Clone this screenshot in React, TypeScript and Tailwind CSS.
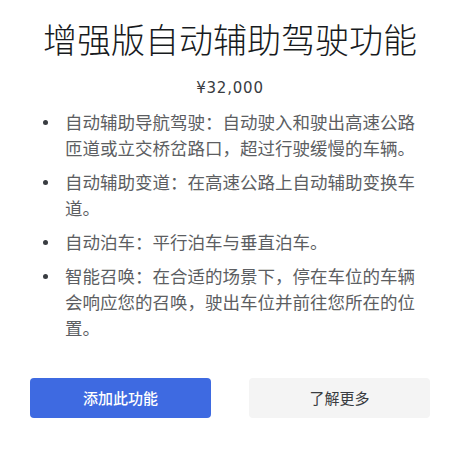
import React from "react";

const cjk = { fontFamily: '"Noto Sans CJK SC", "Noto Sans", sans-serif' };

const features = [
  "自动辅助导航驾驶：自动驶入和驶出高速公路匝道或立交桥岔路口，超过行驶缓慢的车辆。",
  "自动辅助变道：在高速公路上自动辅助变换车道。",
  "自动泊车：平行泊车与垂直泊车。",
  "智能召唤：在合适的场景下，停在车位的车辆会响应您的召唤，驶出车位并前往您所在的位置。",
];

export default function App() {
  return (
    <div className="min-h-[450px] w-[471px] bg-white" style={cjk}>
      <div className="ml-[30px] w-[400px] pt-[19px]">
        <h1 className="text-center text-[34px] leading-[40px] font-light text-[#171a20]">
          增强版自动辅助驾驶功能
        </h1>
        <div
          className="mt-[19px] text-center text-[15px] leading-[20px] tracking-[0.8px] text-[#393c41]"
          style={{ fontFamily: '"DejaVu Sans", "Noto Sans", sans-serif' }}
        >
          ¥32,000
        </div>

        <ul className="mt-[11px] flex flex-col gap-[8px]">
          {features.map((f, i) => (
            <li key={i} className="flex">
              <span className="flex h-[26px] w-[35px] shrink-0 items-center pl-[13px]">
                <span className="h-[5px] w-[5px] rounded-full bg-[#393c41]" />
              </span>
              <span className="text-[17.5px] leading-[26px] text-[#5c5e62]">{f}</span>
            </li>
          ))}
        </ul>

        <div className="mt-[37px] flex justify-between">
          <button className="h-[40px] w-[181px] rounded-[4px] bg-[#3e6ae1] text-[15px] font-medium text-white">
            添加此功能
          </button>
          <button className="h-[40px] w-[181px] rounded-[4px] bg-[#f4f4f4] text-[15px] text-[#393c41]">
            了解更多
          </button>
        </div>
      </div>
    </div>
  );
}
